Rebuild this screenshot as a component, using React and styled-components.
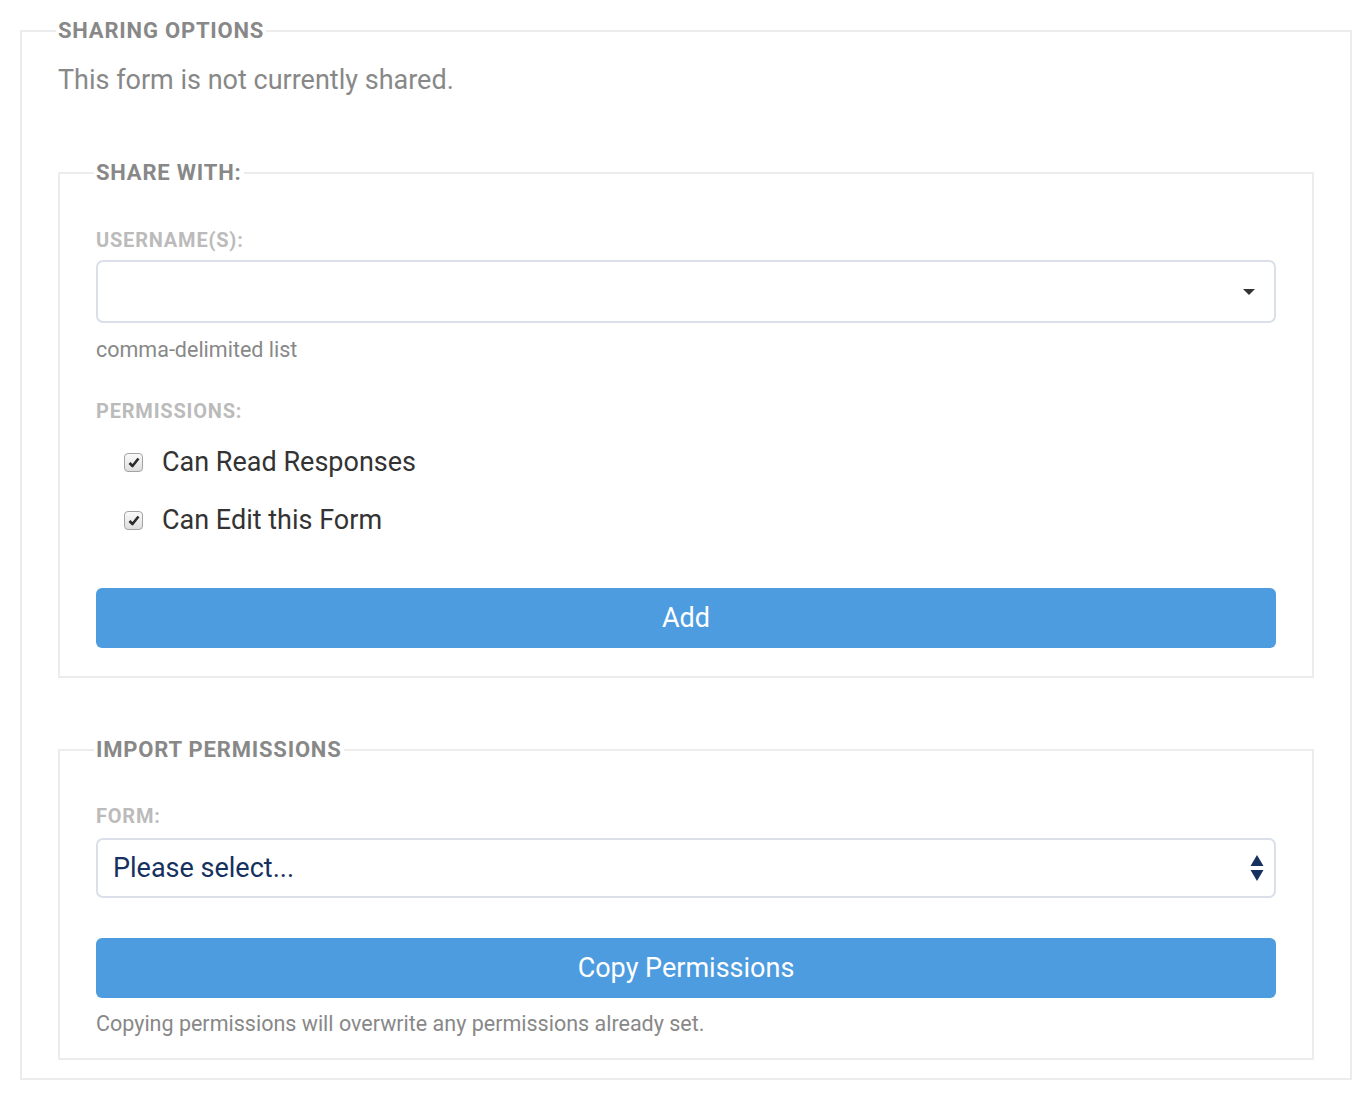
import React from 'react'
import styled, { createGlobalStyle } from 'styled-components'

const Global = createGlobalStyle`
	body {
		margin: 0;
		background: #fff;
		font-family: Roboto, "Liberation Sans", sans-serif;
	}
`

const Page = styled.div`
	padding: 19px 20px 16px;
`

const Fieldset = styled.fieldset`
	margin: ${p => p.$mt || 0}px 0 0;
	padding: 0 36px ${p => p.$pb || 0}px;
	border: 2px solid #ececec;
	min-width: 0;
`

const Legend = styled.legend`
	padding: 0 2px;
	margin-left: -2px;
	font-size: 22px;
	line-height: 24px;
	font-weight: 700;
	letter-spacing: 0.8px;
	color: #888;
	text-transform: uppercase;
`

const Intro = styled.p`
	margin: 18px 0 0;
	font-size: 27px;
	line-height: 39px;
	color: #888;
`

const Label = styled.div`
	margin-top: ${p => p.$mt}px;
	font-size: 20px;
	line-height: 24px;
	font-weight: 700;
	letter-spacing: 0.8px;
	color: #bbb;
	text-transform: uppercase;
`

const SelectBox = styled.div`
	margin-top: ${p => p.$mt}px;
	height: ${p => p.$h}px;
	box-sizing: border-box;
	border: 2px solid #dadfea;
	border-radius: 7px;
	display: flex;
	align-items: center;
	justify-content: space-between;
	padding: 0 10px 0 15px;
	font-size: 27px;
	color: #16305f;
`

const Help = styled.div`
	margin-top: ${p => p.$mt}px;
	font-size: 21.5px;
	line-height: 24px;
	color: #888;
`

const Checks = styled.div`
	margin-top: 20px;
	padding-left: 28px;
	display: flex;
	flex-direction: column;
	gap: 20px;
`

const CheckRow = styled.label`
	display: flex;
	align-items: center;
	gap: 19px;
	height: 38px;
	font-size: 27px;
	color: #333;
`

const Box = styled.span`
	width: 19px;
	height: 19px;
	box-sizing: border-box;
	border: 1px solid #a3a3a3;
	border-radius: 4px;
	background: linear-gradient(#fafafa, #dedede);
	display: flex;
	align-items: center;
	justify-content: center;
`

const Button = styled.button`
	margin-top: ${p => p.$mt}px;
	width: 100%;
	height: 60px;
	border: none;
	border-radius: 6px;
	background: #4d9ce0;
	color: #fff;
	font-family: Roboto, "Liberation Sans", sans-serif;
	font-size: 27px;
	cursor: pointer;
`

function Checkbox({ children }) {
	return <CheckRow>
		<Box>
			<svg width="12" height="11" viewBox="0 0 12 11">
				<path d="M1.5 6 L4.5 9 L10.5 1.5" fill="none" stroke="#2b2b2b" strokeWidth="2.6" strokeLinejoin="round" />
			</svg>
		</Box>
		{children}
	</CheckRow>
}

export default function App() {
	return <Page>
		<Global />
		<Fieldset $pb={18}>
			<Legend>Sharing Options</Legend>
			<Intro>This form is not currently shared.</Intro>

			<Fieldset $mt={61} $pb={28}>
				<Legend>Share with:</Legend>
				<Label $mt={43}>Username(s):</Label>
				<SelectBox $mt={8} $h={63}>
					<span />
					<svg width="14" height="8" viewBox="0 0 14 8" style={{ marginRight: 8 }}>
						<path d="M1 1 L13 1 L7 7 Z" fill="#333" />
					</svg>
				</SelectBox>
				<Help $mt={15}>comma-delimited list</Help>
				<Label $mt={37}>Permissions:</Label>
				<Checks>
					<Checkbox>Can Read Responses</Checkbox>
					<Checkbox>Can Edit this Form</Checkbox>
				</Checks>
				<Button $mt={49}>Add</Button>
			</Fieldset>

			<Fieldset $mt={60} $pb={22}>
				<Legend>Import Permissions</Legend>
				<Label $mt={42}>Form:</Label>
				<SelectBox $mt={10} $h={60}>
					<span>Please select...</span>
					<svg width="14" height="26" viewBox="0 0 14 26">
						<path d="M7 0 L13.5 11 L0.5 11 Z M7 26 L13.5 15 L0.5 15 Z" fill="#16305f" />
					</svg>
				</SelectBox>
				<Button $mt={40}>Copy Permissions</Button>
				<Help $mt={14}>Copying permissions will overwrite any permissions already set.</Help>
			</Fieldset>
		</Fieldset>
	</Page>
}
